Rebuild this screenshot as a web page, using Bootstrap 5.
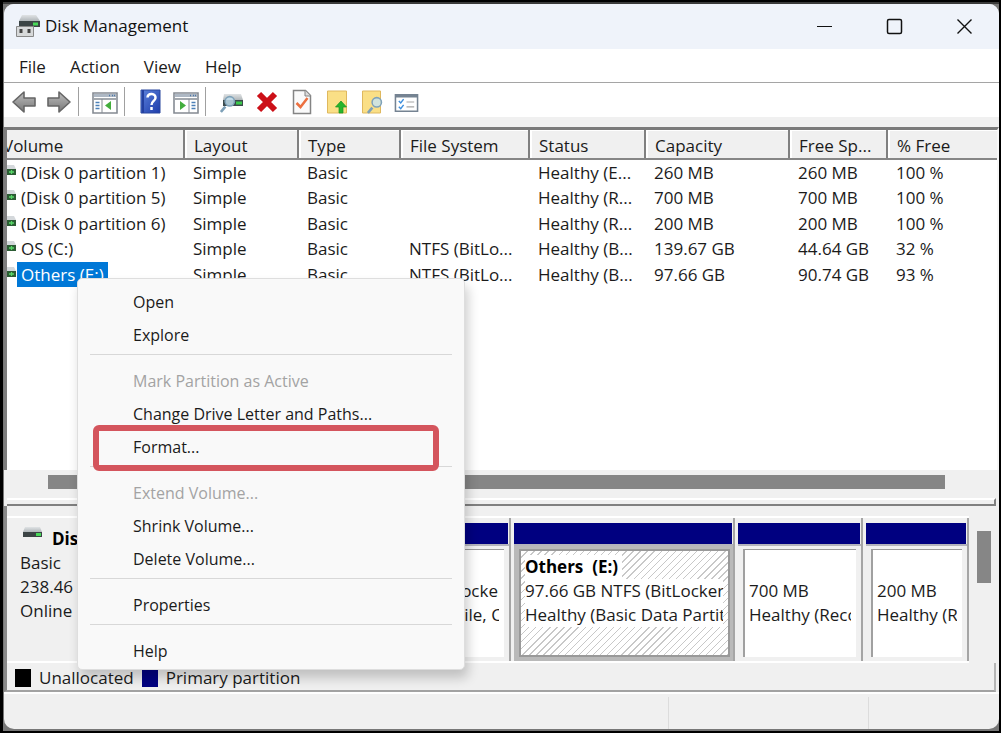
<!DOCTYPE html>
<html lang="en">
<head>
<meta charset="utf-8">
<meta name="viewport" content="width=device-width, initial-scale=1">
<title>Disk Management</title>
<link href="https://cdn.jsdelivr.net/npm/bootstrap@5.3.0/dist/css/bootstrap.min.css" rel="stylesheet">
<style>
  body { background: #000; font-family: "Open Sans", "Noto Sans", sans-serif; font-size: 17px; line-height: 24px; color: #1b1b1b; padding: 2px 2px 2px 3px; }
  button { font: inherit; color: inherit; }
  .desk { background: #777; min-height: calc(100vh - 4px); border-top: 2px solid #3a3a3a; }
  .app-window { background: #f0f0f0; border-radius: 10px; margin-left: 1px; overflow: hidden; }
  .title-bar { background: #eff3fa; height: 45px; padding-bottom: 2px; color: #111; }
  .caption-btn { width: 70px; height: 43px; }
  .menu-bar { background: #fff; height: 34px; border-bottom: 1px solid #a5a5a5; padding: 2px 0 0 3px; }
  .tool-bar { background: #fff; height: 34px; padding: 3px 0 0 2px; }
  .tool-bar button { width: 35px; height: 31px; }
  .tool-sep { width: 11px; height: 29px; padding-left: 2px; }
  .tool-sep::before { content: ""; display: block; width: 1px; height: 100%; background: #a0a0a0; }
  .plain { background: none; border: 0; padding: 0; }
  .volume-list { margin-top: 10px; border-top: 3px solid #7a7a7a; border-left: 3px solid #7e7e7e; border-right: 2px solid #f7f7f7; background: #fff; min-height: 343px; }
  .volume-table { table-layout: fixed; width: 100%; }
  .volume-table th { height: 29px; font-weight: 400; background: #f0f0f0; border-right: 2px solid #808080; border-bottom: 2px solid #868686; box-shadow: inset 2px 1px #fff; padding: 3px 0 0 9px; line-height: 24px; white-space: nowrap; overflow: hidden; }
  .volume-table th:last-child { border-right: 0; }
  .volume-table th:first-child { text-indent: -13px; box-shadow: none; }
  .volume-table td { height: 25px; line-height: 25px; padding: 0 0 0 9px; white-space: nowrap; overflow: hidden; }
  .volume-table tr:nth-child(even) td { height: 26px; line-height: 26px; }
  .volume-table td:first-child { padding-left: 0; }
  .mini-drive { width: 10px; height: 14px; flex: none; }
  .name-cell { padding: 0 4px; }
  .name-cell.picked { background: #0078d7; color: #fff; }
  .h-scroll { height: 28px; padding: 5px 54px 0 41px; margin-left: 3px; }
  .h-scroll div { height: 14px; background: #868686; }
  .splitter { height: 8px; border-top: 2px solid #fff; border-bottom: 2px solid #808080; border-right: 2px solid #808080; margin-left: 3px; margin-right: 3px; }
  .disk-view { border-left: 3px solid #8a8a8a; padding-top: 10px; }
  .disk-row { border-top: 2px solid #fff; height: 147px; border-bottom: 2px solid #fff; }
  .disk-label { width: 142px; padding: 9px 0 0 13px; }
  .disk-name { height: 24px; color: #000; }
  .partition { border-right: 2px solid #a5a5a5; margin-right: 3px; padding-top: 5px; width: 133px; flex: none; background: #f0f0f0; }
  .partition .cap { background: #000080; height: 21px; margin-right: 1px; }
  .part-frame { border-top: 2px solid #b4b4bc; height: 117px; padding: 3px 5px 4px; }
  .part-box { height: 108px; background: #fff; border-top: 1px solid #999; border-left: 2px solid #a0a0a0; padding: 5px 5px 0 4px; }
  .part-text { white-space: pre; overflow: hidden; height: 24px; }
  .part-text span { display: inline-block; }
  .partition.active .part-frame { background: #b9b9b9; padding: 3px 3px 4px 5px; }
  .partition.active .part-box { border: 2px solid #999; padding-top: 4px; background: repeating-linear-gradient(135deg, #fff 0 4px, #c8c8c8 4px 5px); }
  .partition.active .part-text span { background: #fff; }
  .v-scroll { padding: 15px 4px 0 0; width: 18px; margin: 0 4px 0 7px; }
  .v-scroll div { height: 52px; background: #868686; }
  .legend-bar { height: 29px; border-left: 3px solid #8a8a8a; border-bottom: 2px solid #a2a2a2; border-right: 2px solid #b5b5b5; margin-right: 3px; padding: 2px 0 0 8px; }
  .swatch { width: 16px; height: 18px; }
  .swatch.primary { background: #000080; }
  .status-bar { border-top: 2px solid #fff; height: 37px; }
  .status-bar div { border-right: 1px solid #dcdcdc; margin-top: 3px; }
  .context-menu { display: block; position: absolute; left: 77px; top: 278px; width: 388px; padding: 6px 0 2px; border: 1px solid #dedede; border-radius: 5px; background: #f9f9f9; box-shadow: 3px 8px 12px rgba(0,0,0,.2); font-size: 16px; }
  .context-menu .dropdown-item { height: 33px; padding: 0 0 0 55px; line-height: 32px; color: #1b1b1b; }
  .context-menu .dropdown-item:disabled { color: #a3a3a3; }
  .context-menu .dropdown-divider { margin: 3px 12px 9px; border-top: 1px solid #d8d8d8; opacity: 1; }
  .callout-box { position: absolute; inset: -5px 25px -8px 15px; border: 6px solid #d4555d; border-radius: 6px; z-index: 2; pointer-events: none; }
</style>
</head>
<body>
<svg class="position-absolute" width="0" height="0" aria-hidden="true">
  <defs>
    <linearGradient id="metal" x2="0" y2="1"><stop stop-color="#bdbdbd"/><stop offset="1" stop-color="#777"/></linearGradient>
    <linearGradient id="top" x2="0" y2="1"><stop stop-color="#e0e3e5"/><stop offset="1" stop-color="#b0b6b9"/></linearGradient>
    <linearGradient id="blue" x2="1" y2="1"><stop stop-color="#5c82dc"/><stop offset="1" stop-color="#1d3caa"/></linearGradient>
    <symbol id="arrow" viewBox="0 0 26 24"><path d="M2 12 13 2v6h11v8H13v6z" fill="url(#metal)" stroke="#666" stroke-width="1.6" stroke-linejoin="round"/></symbol>
    <symbol id="mini" viewBox="0 0 10 14"><path d="M0 1h7l2 4H0z" fill="#d4d8db"/><path d="M0 5h9v6H0z" fill="#2c5c34"/><path d="M2 8h5M4.500 6v4" stroke="#58d868" stroke-width="1.3"/></symbol>
    <symbol id="pane" viewBox="0 0 26 22"><path d="M1 1h24v20H1z" fill="#fff" stroke="#858b93" stroke-width="1.6"/><path d="M2 2h22v3H2z" fill="#aeb8c4"/><path d="M2 7h22" stroke="#858b93" stroke-width="1.4"/><path d="M17 3.5h1m2 0h1m1 0h1" stroke="#4f78a8" stroke-width="1.5"/></symbol>
    <symbol id="lens" viewBox="0 0 18 20"><path d="M6 13 1 19" stroke="#7da0b8" stroke-width="3"/><circle cx="11" cy="7" r="5.3" fill="#c5e3f3" fill-opacity=".8" stroke="#7fa2b9" stroke-width="1.7"/></symbol>
  </defs>
</svg>
<div class="desk">
<main class="app-window">
  <header class="title-bar d-flex align-items-center">
    <svg class="me-1" style="margin-left:9px" width="28" height="26" viewBox="0 0 28 26"><path d="M9 2h14l4 6H6z" fill="url(#top)"/><path d="M6 8h21v6H6z" fill="#3b4445"/><path d="M20 11h5" stroke="#48d858" stroke-width="3"/><path d="M3.500 13.500h17v10h-17z" fill="#d7d9da" stroke="#888"/><path d="M6.500 16h3v4h-3zm8 0h3v4h-3z" fill="#444"/></svg>
    <span class="flex-grow-1">Disk Management</span>
    <button class="plain caption-btn" aria-label="Minimize"><svg width="17" height="17"><path d="M1 8.5h15" stroke="#111" stroke-width="1.2"/></svg></button>
    <button class="plain caption-btn" aria-label="Maximize"><svg width="17" height="17"><rect x="1.5" y="1.5" width="14" height="14" rx="1.5" fill="none" stroke="#111" stroke-width="1.5"/></svg></button>
    <button class="plain caption-btn" aria-label="Close"><svg width="17" height="17"><path d="m1.5 1.5 14 14m0-14-14 14" stroke="#111" stroke-width="1.4"/></svg></button>
  </header>
  <nav class="menu-bar d-flex">
    <button class="plain px-2 mx-1">File</button><button class="plain px-2 mx-1">Action</button><button class="plain px-2 mx-1">View</button><button class="plain px-2 mx-1">Help</button>
  </nav>
  <div class="tool-bar d-flex align-items-center" role="toolbar" aria-label="Standard">
    <button class="plain" aria-label="Back"><svg width="26" height="24"><use href="#arrow"/></svg></button>
    <button class="plain" aria-label="Forward"><svg width="26" height="24" viewBox="0 0 26 24"><use href="#arrow" width="26" height="24" transform="matrix(-1 0 0 1 26 0)"/></svg></button>
    <span class="tool-sep"></span>
    <button class="plain" aria-label="Show console tree"><svg width="26" height="22" viewBox="0 0 26 22"><use href="#pane"/><path d="M10 7v14" stroke="#858b93"/><path d="M3.5 10.5h4m-4 3h4m-4 3h4" stroke="#4b80b8" stroke-width="1.4"/><path d="M19 9v9l-6-4.500z" fill="#43ae3d"/></svg></button>
    <span class="tool-sep"></span>
    <button class="plain" aria-label="Help"><svg width="21" height="25" viewBox="0 0 21 25"><path d="M1 1h19v23H1z" fill="url(#blue)" stroke="#29479e"/><path d="M3 1v23" stroke="#2340a0" stroke-width="2"/><path d="M7.500 8.500C8 3.500 16 4 15.500 9c-.3 3-4 3-4 7m0 2v3" fill="none" stroke="#fff" stroke-width="2.500"/></svg></button>
    <button class="plain" aria-label="Show action pane"><svg width="26" height="22" viewBox="0 0 26 22"><use href="#pane"/><path d="M16 7v14" stroke="#858b93"/><path d="M18.500 10.500h4m-4 3h4m-4 3h4" stroke="#4b80b8" stroke-width="1.4"/><path d="M7 9v9l6-4.500z" fill="#43ae3d"/></svg></button>
    <span class="tool-sep"></span>
    <button class="plain" aria-label="Rescan disks"><svg width="26" height="24" viewBox="0 0 26 24"><path d="M5 4h17l2 6H4z" fill="url(#top)"/><path d="M4 10h20v6H4z" fill="#3c4a4c"/><path d="M17 13h6" stroke="#3ccb4c" stroke-width="3"/><use href="#lens" x="1" y="5" width="16" height="18"/></svg></button>
    <button class="plain" aria-label="Delete"><svg width="24" height="24" viewBox="0 0 24 24"><path d="m4 4 16 16M20 4 4 20" stroke="#cc1018" stroke-width="6"/></svg></button>
    <button class="plain" aria-label="Properties"><svg width="20" height="26" viewBox="0 0 20 26"><path d="M1.500 1.500h12l5 5v18h-17z" fill="#fafafa" stroke="#848484" stroke-width="1.500"/><path d="M13 1.500v5.500h5.500" fill="#ddd" stroke="#848484"/><path d="m4.500 14 4 4 7-9" fill="none" stroke="#ec7040" stroke-width="2.500"/></svg></button>
    <button class="plain" aria-label="Up"><svg width="22" height="26" viewBox="0 0 22 26"><path d="M1.500 2h19v22h-19z" fill="#fadf86" stroke="#dfb85e"/><path d="M15 12 9.500 18h3.500v6h4v-6h3.500z" fill="#27b52b" stroke="#189222" stroke-width=".7"/></svg></button>
    <button class="plain" aria-label="Find"><svg width="24" height="26" viewBox="0 0 24 26"><path d="M2.500 2h18v22h-18z" fill="#fadf86" stroke="#dfb85e"/><use href="#lens" x="7" y="7" width="16" height="18"/></svg></button>
    <button class="plain" aria-label="Settings"><svg width="25" height="20" viewBox="0 0 26 20"><path d="M1.500 1.500h23v17h-23z" fill="#fff" stroke="#758392" stroke-width="1.600"/><path d="M1.500 3h23" stroke="#758392" stroke-width="2.500"/><path d="m5 8 2 2 3-4M5 14l2 2 3-4" fill="none" stroke="#3e8fdd" stroke-width="1.500"/><path d="M13 9h8m-8 5h8" stroke="#a5a5a5" stroke-width="1.200"/></svg></button>
  </div>

  <section class="volume-list">
    <table class="volume-table">
      <colgroup><col style="width:177px"><col style="width:114px"><col style="width:102px"><col style="width:129px"><col style="width:116px"><col style="width:144px"><col style="width:98px"><col></colgroup>
      <thead><tr><th>Volume</th><th>Layout</th><th>Type</th><th>File System</th><th>Status</th><th>Capacity</th><th>Free Sp...</th><th>% Free</th></tr></thead>
      <tbody>
        <tr><td><div class="d-flex"><svg class="mini-drive mt-1"><use href="#mini"/></svg><span class="name-cell">(Disk 0 partition 1)</span></div></td><td>Simple</td><td>Basic</td><td></td><td>Healthy (E...</td><td>260 MB</td><td>260 MB</td><td>100 %</td></tr>
        <tr><td><div class="d-flex"><svg class="mini-drive mt-1"><use href="#mini"/></svg><span class="name-cell">(Disk 0 partition 5)</span></div></td><td>Simple</td><td>Basic</td><td></td><td>Healthy (R...</td><td>700 MB</td><td>700 MB</td><td>100 %</td></tr>
        <tr><td><div class="d-flex"><svg class="mini-drive mt-1"><use href="#mini"/></svg><span class="name-cell">(Disk 0 partition 6)</span></div></td><td>Simple</td><td>Basic</td><td></td><td>Healthy (R...</td><td>200 MB</td><td>200 MB</td><td>100 %</td></tr>
        <tr><td><div class="d-flex"><svg class="mini-drive mt-1"><use href="#mini"/></svg><span class="name-cell">OS (C:)</span></div></td><td>Simple</td><td>Basic</td><td>NTFS (BitLo...</td><td>Healthy (B...</td><td>139.67 GB</td><td>44.64 GB</td><td>32 %</td></tr>
        <tr><td><div class="d-flex"><svg class="mini-drive mt-1"><use href="#mini"/></svg><span class="name-cell picked">Others (E:)</span></div></td><td>Simple</td><td>Basic</td><td>NTFS (BitLo...</td><td>Healthy (B...</td><td>97.66 GB</td><td>90.74 GB</td><td>93 %</td></tr>
      </tbody>
    </table>
  </section>
  <div class="h-scroll"><div></div></div>
  <div class="splitter"></div>

  <section class="disk-view d-flex">
    <div class="disk-row d-flex flex-grow-1">
      <div class="disk-label flex-shrink-0">
        <div class="disk-name d-flex fw-bold"><svg class="me-2" width="24" height="18" viewBox="0 0 24 18"><path d="M5 0h15l2 5H3z" fill="url(#top)"/><path d="M3 5h19v5H3z" fill="#3c4445"/><path d="M16 7.500h5" stroke="#48d858" stroke-width="3"/></svg>Disk 0</div>
        <div>Basic</div><div>238.46 GB</div><div>Online</div>
      </div>
      <div class="partition"><div class="cap"></div><div class="part-frame"><div class="part-box"><div class="part-text"> </div><div class="part-text">260 MB</div><div class="part-text">Healthy (EFI</div></div></div></div>
      <div class="partition flex-fill"><div class="cap"></div><div class="part-frame"><div class="part-box"><div class="part-text fw-bold">OS  (C:)</div><div class="part-text">139.67 GB NTFS (BitLocker</div><div class="part-text">Healthy (Boot, Page File, C</div></div></div></div>
      <div class="partition active" style="width:221px"><div class="cap"></div><div class="part-frame"><div class="part-box"><div class="part-text fw-bold text-black"><span>Others  (E:) </span></div><div class="part-text"><span>97.66 GB NTFS (BitLocker</span></div><div class="part-text"><span>Healthy (Basic Data Partit</span></div></div></div></div>
      <div class="partition" style="width:125px"><div class="cap"></div><div class="part-frame"><div class="part-box"><div class="part-text"> </div><div class="part-text">700 MB</div><div class="part-text">Healthy (Reco</div></div></div></div>
      <div class="partition me-0" style="width:103px"><div class="cap"></div><div class="part-frame"><div class="part-box"><div class="part-text"> </div><div class="part-text">200 MB</div><div class="part-text">Healthy (R</div></div></div></div>
    </div>
    <div class="v-scroll ms-2"><div></div></div>
  </section>
  <div class="legend-bar d-flex align-items-center"><span class="swatch bg-black me-2"></span><span class="me-2">Unallocated</span><span class="swatch primary me-2"></span><span>Primary partition</span></div>
  <footer class="status-bar d-flex"><div class="flex-grow-1"></div><div style="width:200px"></div><div class="border-0" style="width:130px"></div></footer>
</main>
</div>

<div class="dropdown-menu context-menu" role="menu">
  <button class="dropdown-item" role="menuitem">Open</button>
  <button class="dropdown-item" role="menuitem">Explore</button>
  <hr class="dropdown-divider">
  <button class="dropdown-item" role="menuitem" disabled>Mark Partition as Active</button>
  <button class="dropdown-item" role="menuitem">Change Drive Letter and Paths...</button>
  <div class="position-relative"><button class="dropdown-item" role="menuitem">Format...</button><span class="callout-box"></span></div>
  <hr class="dropdown-divider">
  <button class="dropdown-item" role="menuitem" disabled>Extend Volume...</button>
  <button class="dropdown-item" role="menuitem">Shrink Volume...</button>
  <button class="dropdown-item" role="menuitem">Delete Volume...</button>
  <hr class="dropdown-divider">
  <button class="dropdown-item" role="menuitem">Properties</button>
  <hr class="dropdown-divider">
  <button class="dropdown-item" role="menuitem">Help</button>
</div>
<script src="https://cdn.jsdelivr.net/npm/bootstrap@5.3.0/dist/js/bootstrap.bundle.min.js"></script>
</body>
</html>
